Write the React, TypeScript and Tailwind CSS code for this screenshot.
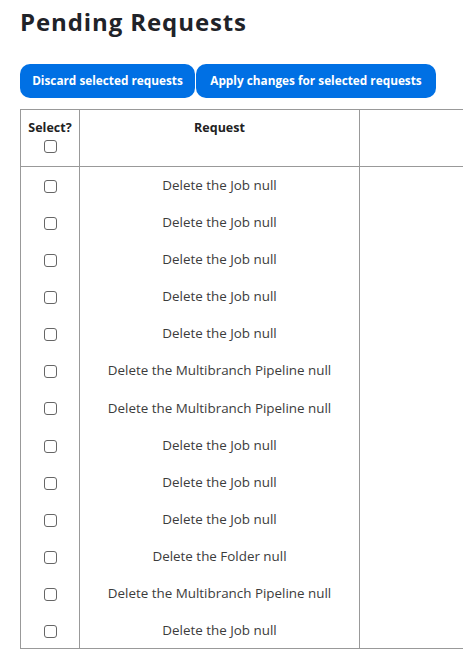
import React from 'react';

const rows: string[] = [
  'Delete the Job null',
  'Delete the Job null',
  'Delete the Job null',
  'Delete the Job null',
  'Delete the Job null',
  'Delete the Multibranch Pipeline null',
  'Delete the Multibranch Pipeline null',
  'Delete the Job null',
  'Delete the Job null',
  'Delete the Job null',
  'Delete the Folder null',
  'Delete the Multibranch Pipeline null',
  'Delete the Job null',
];

function Box() {
  return (
    <input
      type="checkbox"
      className="appearance-none w-[13px] h-[13px] border border-[#666] rounded-[3px] bg-white align-middle"
    />
  );
}

export default function App() {
  return (
    <div
      className="min-h-screen bg-white overflow-hidden px-5 pt-[6px] text-[#3c3c3c]"
      style={{ fontFamily: '"Open Sans", "Noto Sans", sans-serif' }}
    >
      <h1 className="text-[24px] tracking-[0.9px] font-bold text-[#1f2329] leading-[32px]">Pending Requests</h1>

      <div className="flex gap-px mt-[26px]">
        <button className="w-[175px] h-[34px] whitespace-nowrap rounded-[10px] bg-[#0070e4] text-white text-[11.8px] font-bold">
          Discard selected requests
        </button>
        <button className="w-[240px] h-[34px] whitespace-nowrap rounded-[10px] bg-[#0070e4] text-white text-[11.8px] font-bold">
          Apply changes for selected requests
        </button>
      </div>

      <table className="mt-[11px] w-[460px] border-collapse text-[13.4px]">
        <thead>
          <tr className="h-[57px]">
            <th className="w-[59px] border border-[#999] align-top pt-[9px] font-bold text-[12.5px] text-[#222] leading-[18px]">
              <div>Select?</div>
              <Box />
            </th>
            <th className="w-[280px] border border-[#999] align-top pt-[9px] font-bold text-[12.5px] text-[#222] leading-[18px]">
              Request
            </th>
            <th className="border border-[#999] border-r-0"></th>
          </tr>
        </thead>
        <tbody>
          {rows.map((r, i) => (
            <tr key={i} className="h-[37.1px]">
              <td className="border-l border-r border-[#999] text-center">
                <Box />
              </td>
              <td className="border-r border-[#999] text-center">{r}</td>
              <td></td>
            </tr>
          ))}
          <tr>
            <td colSpan={3} className="border-t border-[#999] p-0"></td>
          </tr>
        </tbody>
      </table>
    </div>
  );
}
